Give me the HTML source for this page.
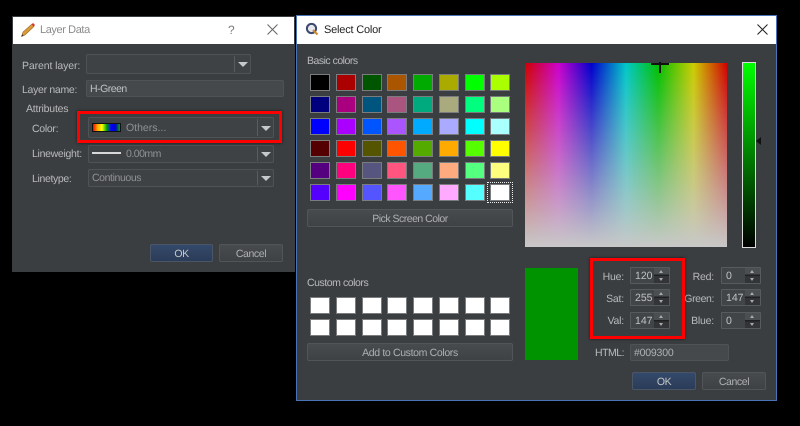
<!DOCTYPE html>
<html><head><meta charset="utf-8"><style>
html,body{margin:0;padding:0;background:#000}
body{width:800px;height:426px;position:relative;overflow:hidden;font-family:"Liberation Sans",sans-serif;font-size:10.5px;color:#b8babb;text-rendering:geometricPrecision}
div,span{position:absolute;box-sizing:border-box;white-space:nowrap}
.dlg{background:#3b3e41}
.tb{background:#fff;left:0;top:0;height:28px}
.l{text-align:right;line-height:14px;height:14px}
.f{background:#424548;border:1px solid #505356;border-radius:2px;color:#8f9193;line-height:17px;padding-left:3px}
.arr{right:0;top:1px;bottom:1px;width:16px;border-left:1px solid #5a5d60}
.arr:after{content:"";position:absolute;left:3px;top:calc(50% - 2px);border-left:5px solid transparent;border-right:5px solid transparent;border-top:5px solid #c6c8c9}
.b{background:linear-gradient(#484b4e,#3f4245);border:1px solid #525558;border-radius:2px;text-align:center;line-height:18px;color:#aeb0b1;letter-spacing:-.4px}
.ok{background:linear-gradient(#34496a,#2b3c58);border:1px solid #4a5566;color:#c4c6c8}
.sp{background:#424548;border:1px solid #585b5e;border-radius:1px;height:17px;width:40px;line-height:16px;padding-left:4px;color:#c0c2c3;font-size:10.5px}
.sp i{position:absolute;right:0;top:0;bottom:0;width:15px;background:linear-gradient(#4c4f52 0,#4c4f52 45%,#1e2022 45%,#1e2022 55%,#323437 55%)}
.sp i:before{content:"";position:absolute;left:5px;top:2px;border-left:2px solid transparent;border-right:2px solid transparent;border-bottom:3px solid #a8aaab}
.sp i:after{content:"";position:absolute;left:5px;bottom:2px;border-left:2px solid transparent;border-right:2px solid transparent;border-top:3px solid #a8aaab}
.g{display:grid;grid-template-columns:repeat(8,20px);column-gap:5.75px}
.g b{display:block;box-sizing:border-box;height:17px;border:1px solid #7a7c7e}
.red{border:3px solid #f00;box-shadow:0 0 3px rgba(0,0,0,.6)}
</style></head><body>

<!-- Layer Data -->
<div class="dlg" style="left:12px;top:16px;width:283px;height:256px"></div>
<div class="tb" style="left:13px;top:17px;width:281px;height:27px"></div>
<svg style="position:absolute;left:20px;top:22px" width="16" height="16" viewBox="0 0 16 16"><path d="M1.5 14.5L3 10L12 2L14 4.5L5 13Z" fill="#d99a3c" stroke="#9a6a25" stroke-width=".6"/><path d="M11.5 2.5L13 1L15 3L13.7 4.6Z" fill="#d8342a"/><path d="M1.5 14.5L2.2 12.2L3.7 13.7Z" fill="#40302a"/></svg>
<div style="left:40px;top:23px;font-size:11px;line-height:14px;color:#8b8b8b;letter-spacing:-.4px">Layer Data</div>
<div style="left:228px;top:22px;font-size:12px;line-height:16px;color:#777">?</div>
<svg style="position:absolute;left:267px;top:24px" width="11" height="11"><path d="M.5.5L10.5 10.5M10.5.5L.5 10.5" stroke="#666" stroke-width="1" fill="none"/></svg>

<div class="l" style="left:22px;top:59px;letter-spacing:-.1px">Parent layer:</div>
<div class="f" style="left:86px;top:54px;width:165px;height:20px;background:#3f4245"><span class="arr"></span></div>
<div class="l" style="left:22px;top:83px;letter-spacing:-.3px">Layer name:</div>
<div class="f" style="left:86px;top:80px;width:198px;height:17px;color:#bfc1c2;background:#46494c;letter-spacing:-.5px">H-Green</div>
<div class="l" style="left:26px;top:102px;letter-spacing:-.2px">Attributes</div>

<div class="l" style="left:32px;top:122px;letter-spacing:-.3px">Color:</div>
<div class="f" style="left:88px;top:117px;width:186px;height:21px;background:#3f4245;line-height:20px;padding-left:37px">Others...<span class="arr"></span></div>
<div style="left:92px;top:123px;width:29px;height:9px;border:1px solid #111;background:linear-gradient(90deg,#f00,#fa0,#ff0,#0a0,#00f,#00c,#0a0)"></div>

<div class="l" style="left:32px;top:147px;letter-spacing:-.3px">Lineweight:</div>
<div class="f" style="left:88px;top:145px;width:186px;height:18px;background:#3f4245;padding-left:37px;letter-spacing:-.5px">0.00mm<span class="arr"></span></div>
<div style="left:92px;top:152px;width:29px;height:2px;background:#d8d8d8"></div>
<div class="l" style="left:32px;top:172px;letter-spacing:-.35px">Linetype:</div>
<div class="f" style="left:88px;top:169px;width:186px;height:18px;background:#3f4245;letter-spacing:-.4px">Continuous<span class="arr"></span></div>

<div class="b ok" style="left:150px;top:244px;width:63px;height:18px">OK</div>
<div class="b" style="left:219px;top:244px;width:64px;height:18px">Cancel</div>
<div class="red" style="left:77px;top:111px;width:205px;height:32px"></div>

<!-- Select Color -->
<div class="dlg" style="left:296px;top:15px;width:481px;height:386px;border:1px solid #4a74b8"></div>
<div class="tb" style="left:297px;top:16px;width:479px;height:28px"></div>
<svg style="position:absolute;left:305px;top:22px" width="14" height="14" viewBox="0 0 14 14"><circle cx="6.5" cy="6.5" r="4.6" fill="#e6e8ee" stroke="#3c4a70" stroke-width="2"/><path d="M8 8L12.5 12.5" stroke="#d28a2c" stroke-width="2"/></svg>
<div style="left:324px;top:23px;font-size:11px;line-height:14px;color:#222;letter-spacing:-.2px">Select Color</div>
<svg style="position:absolute;left:757px;top:24px" width="11" height="11"><path d="M.5.5L10.5 10.5M10.5.5L.5 10.5" stroke="#222" stroke-width="1" fill="none"/></svg>

<div class="l" style="left:307px;top:54px;letter-spacing:-.5px">Basic colors</div>
<div class="g" style="left:310px;top:74px;row-gap:5px">
<b style="background:#000"></b><b style="background:#a00"></b><b style="background:#050"></b><b style="background:#a50"></b><b style="background:#0a0"></b><b style="background:#aa0"></b><b style="background:#0f0"></b><b style="background:#af0"></b>
<b style="background:#00007f"></b><b style="background:#aa007f"></b><b style="background:#00557f"></b><b style="background:#aa557f"></b><b style="background:#00aa7f"></b><b style="background:#aaaa7f"></b><b style="background:#00ff7f"></b><b style="background:#aaff7f"></b>
<b style="background:#00f"></b><b style="background:#a0f"></b><b style="background:#05f"></b><b style="background:#a5f"></b><b style="background:#0af"></b><b style="background:#aaf"></b><b style="background:#0ff"></b><b style="background:#aff"></b>
<b style="background:#500"></b><b style="background:#f00"></b><b style="background:#550"></b><b style="background:#f50"></b><b style="background:#5a0"></b><b style="background:#fa0"></b><b style="background:#5f0"></b><b style="background:#ff0"></b>
<b style="background:#55007f"></b><b style="background:#ff007f"></b><b style="background:#55557f"></b><b style="background:#ff557f"></b><b style="background:#55aa7f"></b><b style="background:#ffaa7f"></b><b style="background:#55ff7f"></b><b style="background:#ffff7f"></b>
<b style="background:#50f"></b><b style="background:#f0f"></b><b style="background:#55f"></b><b style="background:#f5f"></b><b style="background:#5af"></b><b style="background:#faf"></b><b style="background:#5ff"></b><b style="background:#fff"></b>
</div>
<div style="left:487px;top:182px;width:26px;height:21px;border:1px dotted #eee"></div>
<div class="b" style="left:307px;top:209px;width:206px;height:18px;letter-spacing:-.5px">Pick Screen Color</div>

<div class="l" style="left:307px;top:276px;letter-spacing:-.45px">Custom colors</div>
<div class="g" style="left:310px;top:297px;row-gap:5px">
<b style="background:#fff"></b><b style="background:#fff"></b><b style="background:#fff"></b><b style="background:#fff"></b><b style="background:#fff"></b><b style="background:#fff"></b><b style="background:#fff"></b><b style="background:#fff"></b>
<b style="background:#fff"></b><b style="background:#fff"></b><b style="background:#fff"></b><b style="background:#fff"></b><b style="background:#fff"></b><b style="background:#fff"></b><b style="background:#fff"></b><b style="background:#fff"></b>
</div>
<div class="b" style="left:307px;top:343px;width:206px;height:18px;letter-spacing:-.35px">Add to Custom Colors</div>

<div style="left:525px;top:63px;width:202px;height:184px;background:linear-gradient(rgba(200,200,200,0),#c8c8c8),linear-gradient(90deg,#d00000 0,#cc00cc 16.5%,#0000cc 33%,#00c8c8 50%,#00c000 66%,#cccc00 83.5%,#d00000 100%)"></div>
<div style="left:659px;top:62px;width:1.5px;height:11px;background:#111"></div>
<div style="left:651px;top:63px;width:18px;height:1.5px;background:#111"></div>
<div style="left:742px;top:62px;width:14px;height:186px;border:1px solid #ddd;background:linear-gradient(#0f0,#000)"></div>
<div style="left:756px;top:137px;border-top:4px solid transparent;border-bottom:4px solid transparent;border-right:5px solid #111"></div>

<div style="left:525px;top:268px;width:53px;height:92px;background:#009300"></div>

<div class="l" style="right:176px;top:270px;letter-spacing:-.2px">Hue:</div><div class="sp" style="left:630px;top:267px">120<i></i></div>
<div class="l" style="right:176px;top:292px;letter-spacing:-.2px">Sat:</div><div class="sp" style="left:630px;top:289px">255<i></i></div>
<div class="l" style="right:176px;top:314px;letter-spacing:-.2px">Val:</div><div class="sp" style="left:630px;top:312px">147<i></i></div>
<div class="l" style="right:86px;top:270px;letter-spacing:-.2px">Red:</div><div class="sp" style="left:721px;top:267px">0<i></i></div>
<div class="l" style="right:86px;top:292px;letter-spacing:-.4px">Green:</div><div class="sp" style="left:721px;top:289px">147<i></i></div>
<div class="l" style="right:86px;top:314px;letter-spacing:-.2px">Blue:</div><div class="sp" style="left:721px;top:312px">0<i></i></div>
<div class="red" style="left:590px;top:258px;width:95px;height:81px"></div>

<div class="l" style="right:176px;top:346px;letter-spacing:-.5px">HTML:</div>
<div class="f" style="left:630px;top:344px;width:99px;height:17px;color:#aeb0b1;background:#46494c;letter-spacing:-.2px">#009300</div>
<div class="b ok" style="left:632px;top:372px;width:64px;height:18px">OK</div>
<div class="b" style="left:702px;top:372px;width:64px;height:18px">Cancel</div>
</body></html>
